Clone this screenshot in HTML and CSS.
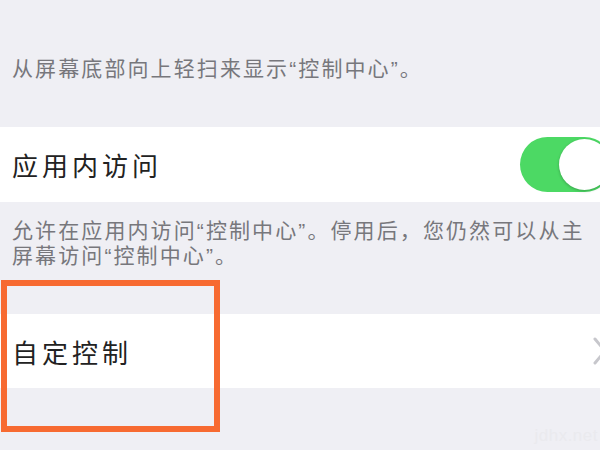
FILE: index.html
```html
<!DOCTYPE html>
<html lang="zh-CN">
<head>
  <meta charset="UTF-8" />
  <meta name="viewport" content="width=device-width, initial-scale=1.0" />
  <title>控制中心</title>
  <link rel="stylesheet" href="styles.css">
</head>
<body>
  <main class="settings">
    <p class="note note-top">从屏幕底部向上轻扫来显示“控制中心”。</p>

    <div class="row">
      <span class="row-title">应用内访问</span>
      <span class="switch on"><span class="knob"></span></span>
    </div>

    <p class="note note-access">允许在应用内访问“控制中心”。停用后，您仍然可以从主<br>屏幕访问“控制中心”。</p>

    <div class="row row-link">
      <span class="row-title">自定控制</span>
      <svg class="chevron" width="14" height="28" viewBox="0 0 14 28">
        <polyline points="2,2 12,14 2,26" fill="none" stroke="#c7c7cc" stroke-width="3" stroke-linecap="round" stroke-linejoin="round"/>
      </svg>
    </div>

    <div class="highlight"></div>
    <div class="watermark">jdhx.net</div>
  </main>
</body>
</html>
```

FILE: styles.css
```css
:root {
  --bg: #efeff4;
  --cell: #ffffff;
  --text: #222222;
  --note: #77777c;
  --green: #4cd964;
  --mark: #f76a31;
}
html, body {
  margin: 0;
  padding: 0;
}
body {
  background: var(--bg);
  font-family: "Liberation Sans", "Noto Sans CJK SC", sans-serif;
  width: 600px;
  height: 450px;
  overflow: hidden;
}
.settings {
  position: relative;
  height: 450px;
}
.note {
  margin: 0;
  padding: 0 0 0 12px;
  color: var(--note);
  font-size: 21px;
  letter-spacing: 2.1px;
  white-space: nowrap;
}
.note-top {
  padding-top: 55px;
  line-height: 28px;
  margin-bottom: 44px;
}
.note-access {
  padding-top: 16px;
  line-height: 25px;
  margin-bottom: 46px;
}
.row {
  background: var(--cell);
  height: 75px;
  display: flex;
  align-items: center;
  justify-content: space-between;
  padding-left: 12px;
  overflow: hidden;
}
.row-link {
  height: 74px;
}
.row-title {
  color: var(--text);
  font-size: 26px;
  letter-spacing: 4px;
}
.switch {
  width: 92px;
  height: 55px;
  border-radius: 28px;
  background: var(--green);
  margin-right: -12px;
  position: relative;
  flex-shrink: 0;
}
.switch .knob {
  position: absolute;
  right: 2px;
  top: 2px;
  width: 51px;
  height: 51px;
  border-radius: 50%;
  background: #fff;
  box-shadow: 0 1px 3px rgba(0,0,0,0.25);
}
.chevron {
  margin-right: -7px;
  flex-shrink: 0;
}
.highlight {
  position: absolute;
  left: 1px;
  top: 280px;
  width: 207px;
  height: 140px;
  border: 6px solid var(--mark);
}
.watermark {
  position: absolute;
  right: 2px;
  bottom: 4px;
  font-size: 17px;
  color: #eaeaee;
  letter-spacing: 0.5px;
}
```
